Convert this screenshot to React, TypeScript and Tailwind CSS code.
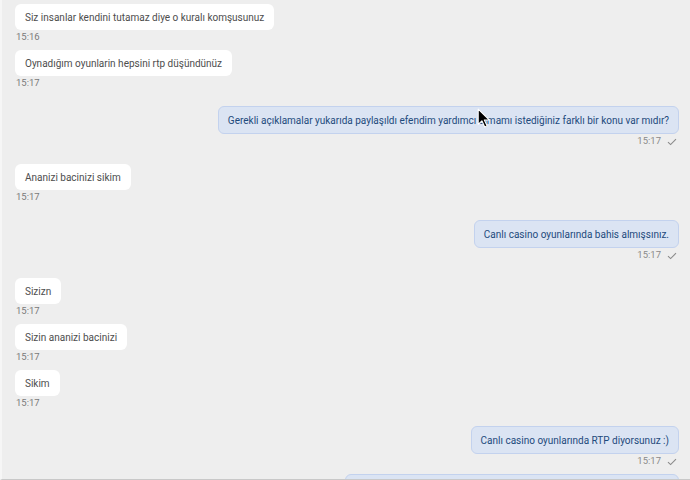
import React from "react";

type Msg = { side: "in" | "out"; text: string; time: string };

const groups: Msg[][] = [
  [
    { side: "in", text: "Siz insanlar kendini tutamaz diye o kuralı komşusunuz", time: "15:16" },
    { side: "in", text: "Oynadığım oyunlarin hepsini rtp düşündünüz", time: "15:17" },
  ],
  [
    {
      side: "out",
      text: "Gerekli açıklamalar yukarıda paylaşıldı efendim yardımcı olmamı istediğiniz farklı bir konu var mıdır?",
      time: "15:17",
    },
  ],
  [{ side: "in", text: "Ananizi bacinizi sikim", time: "15:17" }],
  [{ side: "out", text: "Canlı casino oyunlarında bahis almışsınız.", time: "15:17" }],
  [
    { side: "in", text: "Sizizn", time: "15:17" },
    { side: "in", text: "Sizin ananizi bacinizi", time: "15:17" },
    { side: "in", text: "Sikim", time: "15:17" },
  ],
  [
    { side: "out", text: "Canlı casino oyunlarında RTP diyorsunuz :)", time: "15:17" },
    {
      side: "out",
      text: "Başka bir konuda yardımcı olabileceğimiz bir durum var mıdır efendim?",
      time: "15:18",
    },
  ],
];

function Check() {
  return (
    <svg width="10" height="8" viewBox="0 0 10 8" className="ml-[6px]">
      <path d="M1 4.2 L3.6 6.6 L9 1.2" fill="none" stroke="#8a8a8a" strokeWidth="1.1" />
    </svg>
  );
}

function Bubble({ m }: { m: Msg }) {
  if (m.side === "in") {
    return (
      <div className="flex flex-col items-start mb-[5px]">
        <div className="bg-white rounded-[6px] h-[26px] px-[10px] flex items-center text-[10px] text-[#4d4d4d] whitespace-nowrap">
          {m.text}
        </div>
        <div className="h-[15px] flex items-center pl-[1px] text-[9.5px] text-[#7a7a7a]">{m.time}</div>
      </div>
    );
  }
  return (
    <div className="flex flex-col items-end mb-[5px]">
      <div className="bg-[#dbe4f3] border border-[#c3d2ee] rounded-[6px] h-[28px] px-[9px] flex items-center text-[10px] text-[#1d4a7c] whitespace-nowrap">
        {m.text}
      </div>
      <div className="h-[15px] flex items-center pr-[2px] text-[9.5px] text-[#8a8a8a]">
        {m.time}
        <Check />
      </div>
    </div>
  );
}

export default function App() {
  return (
    <div
      className="relative w-[690px] h-[480px] overflow-hidden bg-[#eeeeee] border-l-2 border-l-[#f6f6f6] border-b border-b-[#c8c8c8]"
      style={{ fontFamily: "Roboto, 'Noto Sans', sans-serif" }}
    >
      <div className="flex flex-col gap-[10px] pt-[4px] pl-[13px] pr-[11px]">
        {groups.map((g, i) => (
          <div key={i} className="flex flex-col">
            {g.map((m, j) => (
              <Bubble key={j} m={m} />
            ))}
          </div>
        ))}
      </div>
      {/* mouse pointer */}
      <svg
        className="absolute left-[475px] top-[108px]"
        width="14"
        height="20"
        viewBox="0 0 13 19"
      >
        <path
          d="M1 1 L1 15.5 L4.5 12.2 L7.2 18 L9.4 17 L6.8 11.4 L11.6 11.4 Z"
          fill="#000"
          stroke="#fff"
          strokeWidth="1"
          strokeLinejoin="round"
        />
      </svg>
    </div>
  );
}
